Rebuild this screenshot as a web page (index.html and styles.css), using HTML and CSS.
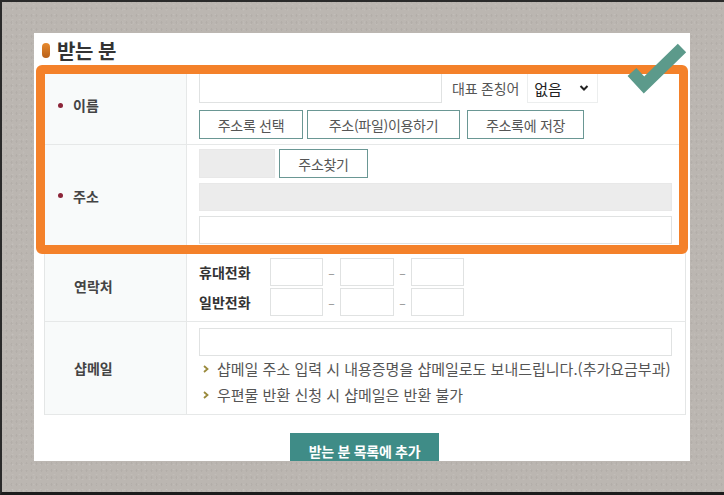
FILE: index.html
```html
<!DOCTYPE html>
<html lang="ko">
<head>
<meta charset="utf-8">
<title>받는 분</title>
<link rel="stylesheet" href="styles.css">
</head>
<body>
<div class="page">
  <div class="panel">
    <h2 class="title"><span class="pill"></span>받는 분</h2>
    <div class="form">
      <div class="row row-name">
        <div class="label"><span class="req"></span>이름</div>
        <div class="field">
          <div class="line">
            <input class="input w-name" type="text">
            <span class="hint">대표 존칭어</span>
            <span class="select">없음<svg width="10" height="8" viewBox="0 0 10 8"><path d="M1.5 2 L5 5.5 L8.5 2" fill="none" stroke="#222" stroke-width="2"/></svg></span>
          </div>
          <div class="line gap-btn">
            <button class="btn w-b1">주소록 선택</button>
            <button class="btn w-b2">주소(파일)이용하기</button>
            <button class="btn w-b3">주소록에 저장</button>
          </div>
        </div>
      </div>
      <div class="row row-addr">
        <div class="label label-up"><span class="req"></span>주소</div>
        <div class="field stack-5">
          <div class="line gap-4">
            <input class="input gray w-zip" type="text" disabled>
            <button class="btn w-find">주소찾기</button>
          </div>
          <input class="input gray full" type="text" disabled>
          <input class="input full" type="text">
        </div>
      </div>
      <div class="row row-tel">
        <div class="label plain">연락처</div>
        <div class="field stack-2">
          <div class="tel">
            <span class="tel-label">휴대전화</span>
            <input class="input w-tel" type="text"><span class="dash">–</span>
            <input class="input w-tel2" type="text"><span class="dash">–</span>
            <input class="input w-tel" type="text">
          </div>
          <div class="tel">
            <span class="tel-label">일반전화</span>
            <input class="input w-tel" type="text"><span class="dash">–</span>
            <input class="input w-tel2" type="text"><span class="dash">–</span>
            <input class="input w-tel" type="text">
          </div>
        </div>
      </div>
      <div class="row row-mail">
        <div class="label plain">샵메일</div>
        <div class="field">
          <input class="input full" type="text">
          <ul class="notes">
            <li><svg class="bul" width="6" height="8" viewBox="0 0 6 8"><path d="M1 1 L4.5 4 L1 7" fill="none" stroke="#9a8a3c" stroke-width="1.8"/></svg>샵메일 주소 입력 시 내용증명을 샵메일로도 보내드립니다.(추가요금부과)</li>
            <li><svg class="bul" width="6" height="8" viewBox="0 0 6 8"><path d="M1 1 L4.5 4 L1 7" fill="none" stroke="#9a8a3c" stroke-width="1.8"/></svg>우편물 반환 신청 시 샵메일은 반환 불가</li>
          </ul>
        </div>
      </div>
    </div>
    <div class="actions"><button class="btn-primary">받는 분 목록에 추가</button></div>
    <div class="highlight"></div>
  </div>
  <svg class="check" width="80" height="64" viewBox="0 0 80 64"><polyline points="12,31 24,44 62,7" fill="none" stroke="#5c9a8b" stroke-width="12"/></svg>
</div>
</body>
</html>
```
FILE: styles.css
```css
* { box-sizing: border-box; }
html, body { margin: 0; padding: 0; background: #bab5b0; }
body {
  font-family: "Noto Sans CJK KR", "Noto Sans", sans-serif;
}
.page {
  position: relative;
  width: 724px;
  height: 495px;
  overflow: hidden;
  background-color: #bbb6b1;
  background-image:
    radial-gradient(rgba(255,255,255,0.09) 0.8px, transparent 1.2px),
    radial-gradient(rgba(0,0,0,0.045) 0.8px, transparent 1.2px),
    radial-gradient(rgba(255,255,255,0.06) 0.8px, transparent 1.2px);
  background-size: 7px 5px, 5px 7px, 11px 13px;
  background-position: 0 0, 2px 3px, 5px 1px;
  border-top: 2px solid #2a2a2a;
  border-left: 2px solid #2a2a2a;
  border-bottom: 3px solid #1c1c1c;
  padding: 31px 0 0 32px;
}
.panel {
  position: relative;
  width: 656px;
  height: 428px;
  background: #fff;
  overflow: hidden;
}
.title {
  margin: 0;
  height: 33px;
  display: flex;
  align-items: center;
  padding: 2px 0 0 8px;
  font-size: 20px;
  font-weight: 700;
  color: #333;
  letter-spacing: -0.5px;
}
.pill {
  display: inline-block;
  width: 8px;
  height: 15px;
  border-radius: 4px;
  background: linear-gradient(#e88a2e, #b8601a);
  margin-right: 7px;
}
.form {
  margin-left: 10px;
  width: 642px;
  border-left: 1px solid #e4e6e6;
  border-right: 1px solid #e4e6e6;
}
.row {
  display: grid;
  grid-template-columns: 142px 1fr;
  border-bottom: 1px solid #e6e8e8;
}
.row-name { height: 79px; }
.row-addr { height: 108px; }
.row-tel { height: 69px; }
.row-mail { height: 93px; }
.label {
  background: #f8fafa;
  border-right: 1px solid #e6e8e8;
  display: flex;
  align-items: center;
  padding-left: 13px;
  font-size: 14px;
  font-weight: 700;
  color: #444;
}
.label-up { padding-bottom: 6px; }
.label.plain { padding-left: 29px; }
.row-tel .label { padding-bottom: 3px; }
.req {
  width: 5px;
  height: 5px;
  border-radius: 50%;
  background: #8c2438;
  margin-right: 10px;
}
.field {
  padding: 7px 12px 0 12px;
  display: flex;
  flex-direction: column;
  gap: 7px;
}
.row-addr .field { padding-top: 4px; }
.row-tel .field { padding-top: 5px; }
.row-mail .field { padding-top: 6px; gap: 0; }
.stack-5 { gap: 5px !important; }
.stack-2 { gap: 2px !important; }
.line {
  display: flex;
  align-items: center;
}
.gap-btn { gap: 4px; }
.gap-4 { gap: 4px; }
.input {
  display: block;
  height: 30px;
  border: 1px solid #e0e2e2;
  background: #fff;
  padding: 0;
  margin: 0;
  font: inherit;
  outline: none;
}
.input.gray { background: #ececec; border-color: #e8e8e8; }
.w-name { width: 243px; }
.w-zip { width: 76px; height: 29px; }
.full { width: 473px; height: 28px; }
.hint {
  margin-left: 10px;
  font-size: 14px;
  color: #555;
  letter-spacing: -0.2px;
}
.select {
  margin-left: 8px;
  width: 71px;
  height: 30px;
  border: 1px solid #eceeee;
  display: flex;
  align-items: center;
  justify-content: space-between;
  padding: 0 8px 0 6px;
  font-size: 15px;
  color: #222;
}
.btn {
  height: 29px;
  border: 1px solid #6a9794;
  background: #fff;
  font: inherit;
  font-size: 14px;
  color: #555;
  padding: 0;
  letter-spacing: -0.3px;
}
.w-b1 { width: 104px; }
.w-b2 { width: 153px; }
.w-b3 { width: 117px; margin-left: 3px; }
.w-find { width: 89px; }
.tel {
  display: flex;
  align-items: center;
}
.tel-label {
  width: 71px;
  font-size: 14px;
  font-weight: 700;
  color: #333;
}
.w-tel { width: 53px; height: 28px; }
.w-tel2 { width: 54px; height: 28px; }
.dash {
  width: 17px;
  text-align: center;
  color: #888;
  font-size: 12px;
}
.notes {
  list-style: none;
  margin: 0;
  padding: 0 0 0 4px;
  font-size: 15px;
  color: #555;
  letter-spacing: 0;
}
.notes li {
  display: flex;
  align-items: center;
  line-height: 26px;
}
.bul { margin-right: 8px; }
.actions {
  display: flex;
  justify-content: center;
  padding-top: 18px;
  padding-left: 5px;
}
.btn-primary {
  width: 149px;
  height: 36px;
  border: none;
  background: #3f8c87;
  color: #fff;
  font: inherit;
  font-size: 14px;
  font-weight: 700;
  padding: 0;
  letter-spacing: -0.3px;
}
.highlight {
  position: absolute;
  left: 2px;
  top: 32px;
  width: 652px;
  height: 189px;
  border: 9px solid #f4812a;
  border-radius: 6px;
  pointer-events: none;
}
.check {
  position: absolute;
  left: 618px;
  top: 39px;
}
```
